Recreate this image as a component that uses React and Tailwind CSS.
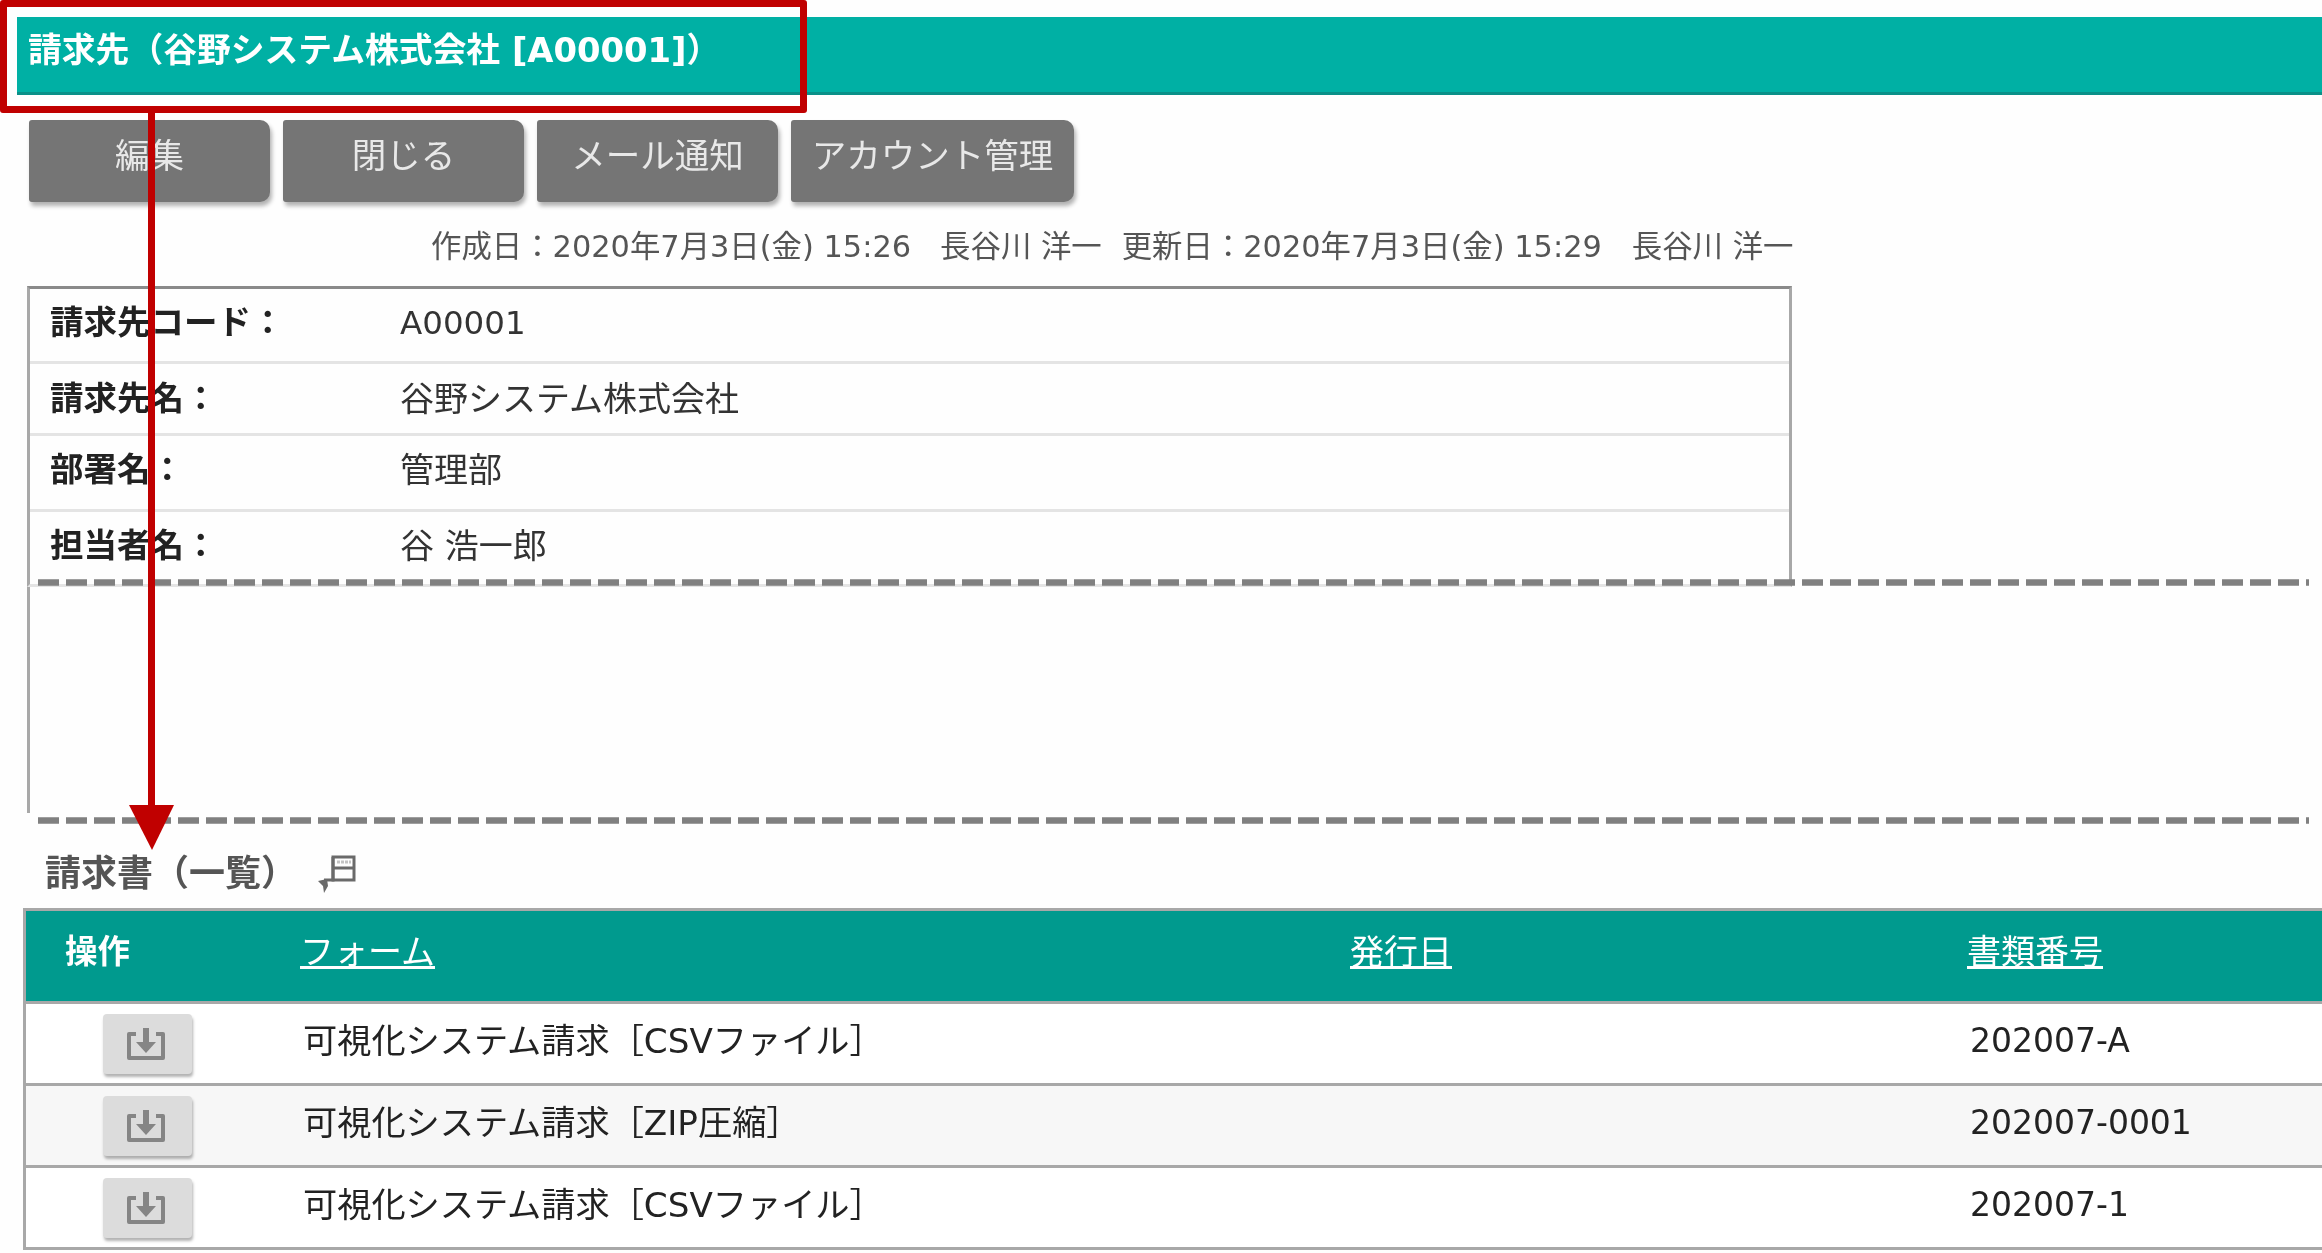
const font = { fontFamily: '"DejaVu Sans", "Noto Sans CJK JP", sans-serif' };

function Tool({ children, w }) {
  return (
    <div className={`${w} h-[82px] shrink-0 rounded-r-[10px] rounded-l-[3px] bg-[#757575] shadow-[2px_4px_4px_rgba(0,0,0,0.3)] flex items-center justify-center pb-2 text-[34.5px] text-[#e8e8e8]`}>
      {children}
    </div>
  );
}

function InfoRow({ label, value, h, last, pad, size = 'text-[34px]' }) {
  return (
    <div className={`${h} flex items-center pl-[20px] ${pad} ${last ? '' : 'border-b-[3px] border-[#e4e4e4]'}`}>
      <div className="w-[350px] font-bold text-[33.5px] text-[#222]">{label}</div>
      <div className={`${size} text-[#333]`}>{value}</div>
    </div>
  );
}

function DownloadIcon() {
  return (
    <svg width="38" height="34" viewBox="0 0 38 34" fill="none" stroke="#858585" strokeWidth="4">
      <path d="M9 7H2V31H36V7H29" strokeLinejoin="round" />
      <path d="M19 1V16" strokeWidth="6" />
      <path d="M9 15H29L19 26Z" fill="#858585" stroke="none" />
    </svg>
  );
}

function PinIcon() {
  return (
    <svg width="38" height="38" viewBox="0 0 38 38" fill="none" stroke="#6a6a6a" strokeWidth="3">
      <path d="M15 2H36V25H15Z" />
      <path d="M15 13H36" />
      <path d="M19 7H33" stroke="#c4c4c4" strokeDasharray="3 1" />
      <path d="M15 2V25H6" />
      <path d="M0 26L9 24L10 31L6 38L5 31Z" fill="#6a6a6a" stroke="none" />
    </svg>
  );
}

function TableRow({ form, num, alt }) {
  return (
    <div className={`h-[82px] grid grid-cols-[274px_1050px_617px_1fr] border-b-[3px] border-[#a8a8a8] ${alt ? 'bg-[#f7f7f7]' : 'bg-white'}`}>
      <div className="flex pl-[77px] pt-[10px]">
        <div className="w-[89px] h-[60px] rounded-[4px] bg-[#dcdcdc] shadow-[1px_3px_3px_rgba(0,0,0,0.3)] flex items-center justify-center pr-[3px]">
          <DownloadIcon />
        </div>
      </div>
      <div className="pl-[3px] pt-[13px] text-[34.2px] leading-[48px] text-[#222] whitespace-nowrap">{form}</div>
      <div />
      <div className="pl-[3px] pt-[13px] text-[33px] leading-[48px] text-[#222]">{num}</div>
    </div>
  );
}

export default function App() {
  return (
    <div className="relative w-[2322px] h-[1253px] overflow-hidden bg-[#fefefe]" style={font}>
      <div className="blur-[0.5px] pt-[17px]">
        <div className="ml-[17px] h-[78px] bg-[#00b0a4] border-b-[3px] border-[#0a9088] pl-[11px] flex items-center pb-[6px]">
          <span className="font-bold text-[33.8px] text-white whitespace-nowrap">請求先（谷野システム株式会社 [A00001]）</span>
        </div>

        <div className="mt-[25px] ml-[29px] flex gap-[13px]">
          <Tool w="w-[241px]">編集</Tool>
          <Tool w="w-[241px]">閉じる</Tool>
          <Tool w="w-[241px]">メール通知</Tool>
          <Tool w="w-[283px]">アカウント管理</Tool>
        </div>

        <div className="mt-[24px] ml-[431px] h-[42px] flex items-center text-[30.4px] text-[#555] whitespace-nowrap">
          <span>作成日：2020年7月3日(金) 15:26</span>
          <span className="ml-[29px]">長谷川 洋一</span>
          <span className="ml-[20px]">更新日：2020年7月3日(金) 15:29</span>
          <span className="ml-[30px]">長谷川 洋一</span>
        </div>

        <div className="mt-[18px] ml-[27px] w-[1765px] h-[301px] border-x-[3px] border-t-[3px] border-b-[3px] border-x-[#a8a8a8] border-t-[#8a8a8a] border-b-[#e4e4e4]">
          <InfoRow h="h-[75px]" pad="pb-1" size="text-[32.5px]" label="請求先コード：" value="A00001" />
          <InfoRow h="h-[72px]" pad="pt-[1px]" label="請求先名：" value="谷野システム株式会社" />
          <InfoRow h="h-[76px]" pad="pb-1" label="部署名：" value="管理部" />
          <InfoRow h="h-[72px]" pad="pb-1" last label="担当者名：" value="谷 浩一郎" />
        </div>
        <div className="ml-[27px] h-[226px] border-l-[3px] border-[#a8a8a8]" />

        <div className="mt-[42px] ml-[45px] h-[38px] flex items-center">
          <span className="font-bold text-[36px] text-[#555] w-[273px] whitespace-nowrap">請求書（一覧）</span>
          <PinIcon />
        </div>

        <div className="mt-[15px] ml-[23px] border-l-[3px] border-[#a8a8a8]">
          <div className="h-[96px] bg-[#009a8e] border-y-[3px] border-[#a8a8a8] grid grid-cols-[274px_1050px_617px_1fr] pt-[17px] text-[34px] leading-[48px] text-white">
            <div className="pl-[39px] font-bold text-[32.5px]">操作</div>
            <div className="underline whitespace-nowrap">フォーム</div>
            <div className="underline whitespace-nowrap">発行日</div>
            <div className="underline whitespace-nowrap">書類番号</div>
          </div>
          <TableRow form="可視化システム請求［CSVファイル］" num="202007-A" />
          <TableRow alt form="可視化システム請求［ZIP圧縮］" num="202007-0001" />
          <TableRow form="可視化システム請求［CSVファイル］" num="202007-1" />
        </div>
      </div>

      {/* annotations lying over the screenshot */}
      <div className="absolute left-0 top-0 w-[807px] h-[113px] border-[7px] border-[#c00000] rounded-[3px]" />
      <svg className="absolute left-0 top-0" width="2322" height="1253" fill="none">
        <path d="M38 582.5H2309M38 820.5H2309" stroke="#808080" strokeWidth="6.5" strokeDasharray="21 7" />
        <path d="M151.5 113V806" stroke="#c00000" strokeWidth="7" />
        <path d="M129 805H174L152 850Z" fill="#c00000" />
      </svg>
    </div>
  );
}
